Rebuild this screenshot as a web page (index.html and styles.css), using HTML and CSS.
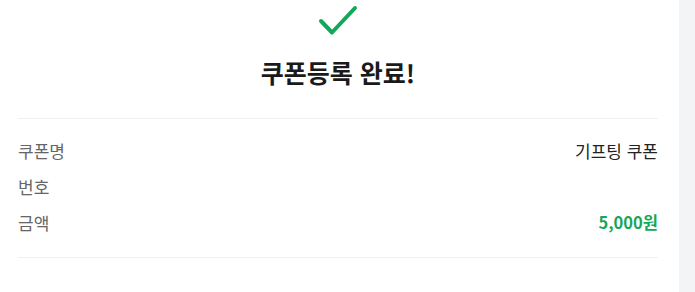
FILE: index.html
```html
<!DOCTYPE html>
<html lang="ko">
  <head>
    <meta charset="UTF-8" />
    <meta name="viewport" content="width=device-width, initial-scale=1.0" />
    <title>쿠폰등록 완료</title>
    <link rel="stylesheet" href="styles.css">
  </head>
  <body>
    <main class="page">
      <div class="result">
        <svg class="check" width="40" height="32" viewBox="0 0 40 32">
          <path d="M3 16 L14 27.5 L37 3" fill="none" stroke="#12a85a" stroke-width="4" stroke-linecap="round" stroke-linejoin="round" />
        </svg>
        <h1>쿠폰등록 완료!</h1>
      </div>

      <dl class="info">
        <div class="row">
          <dt>쿠폰명</dt>
          <dd>기프팅 쿠폰</dd>
        </div>
        <div class="row">
          <dt>번호</dt>
          <dd class="blank"></dd>
        </div>
        <div class="row">
          <dt>금액</dt>
          <dd class="price">5,000원</dd>
        </div>
      </dl>
    </main>
    <aside class="side"></aside>
  </body>
</html>
```

FILE: styles.css
```css
* {
  margin: 0;
  padding: 0;
  box-sizing: border-box;
}

body {
  font-family: "Noto Sans CJK KR", "Noto Sans", sans-serif;
  background: #fff;
  color: #222;
  display: flex;
  height: 292px;
  overflow: hidden;
}

.page {
  width: 679px;
  padding: 0 21px 0 18px;
}

.side {
  flex: 1;
  background: #f3f4f6;
}

.result {
  display: flex;
  flex-direction: column;
  align-items: center;
  padding-top: 5px;
  padding-bottom: 31px;
  border-bottom: 1px solid #f0f0f0;
}

.check {
  display: block;
}

.result h1 {
  margin-top: 20px;
  font-size: 25px;
  font-weight: 700;
  line-height: 30px;
  color: #1a1a1a;
}

.info {
  padding: 13px 0 17px;
  border-bottom: 1px solid #f0f0f0;
}

.row {
  display: flex;
  justify-content: space-between;
  align-items: center;
  height: 36px;
}

.row dt {
  font-size: 17px;
  color: #666;
}

.row dd {
  font-size: 17px;
  color: #222;
}

.row .price {
  font-size: 16.5px;
  font-weight: 700;
  color: #12a85a;
}
```
